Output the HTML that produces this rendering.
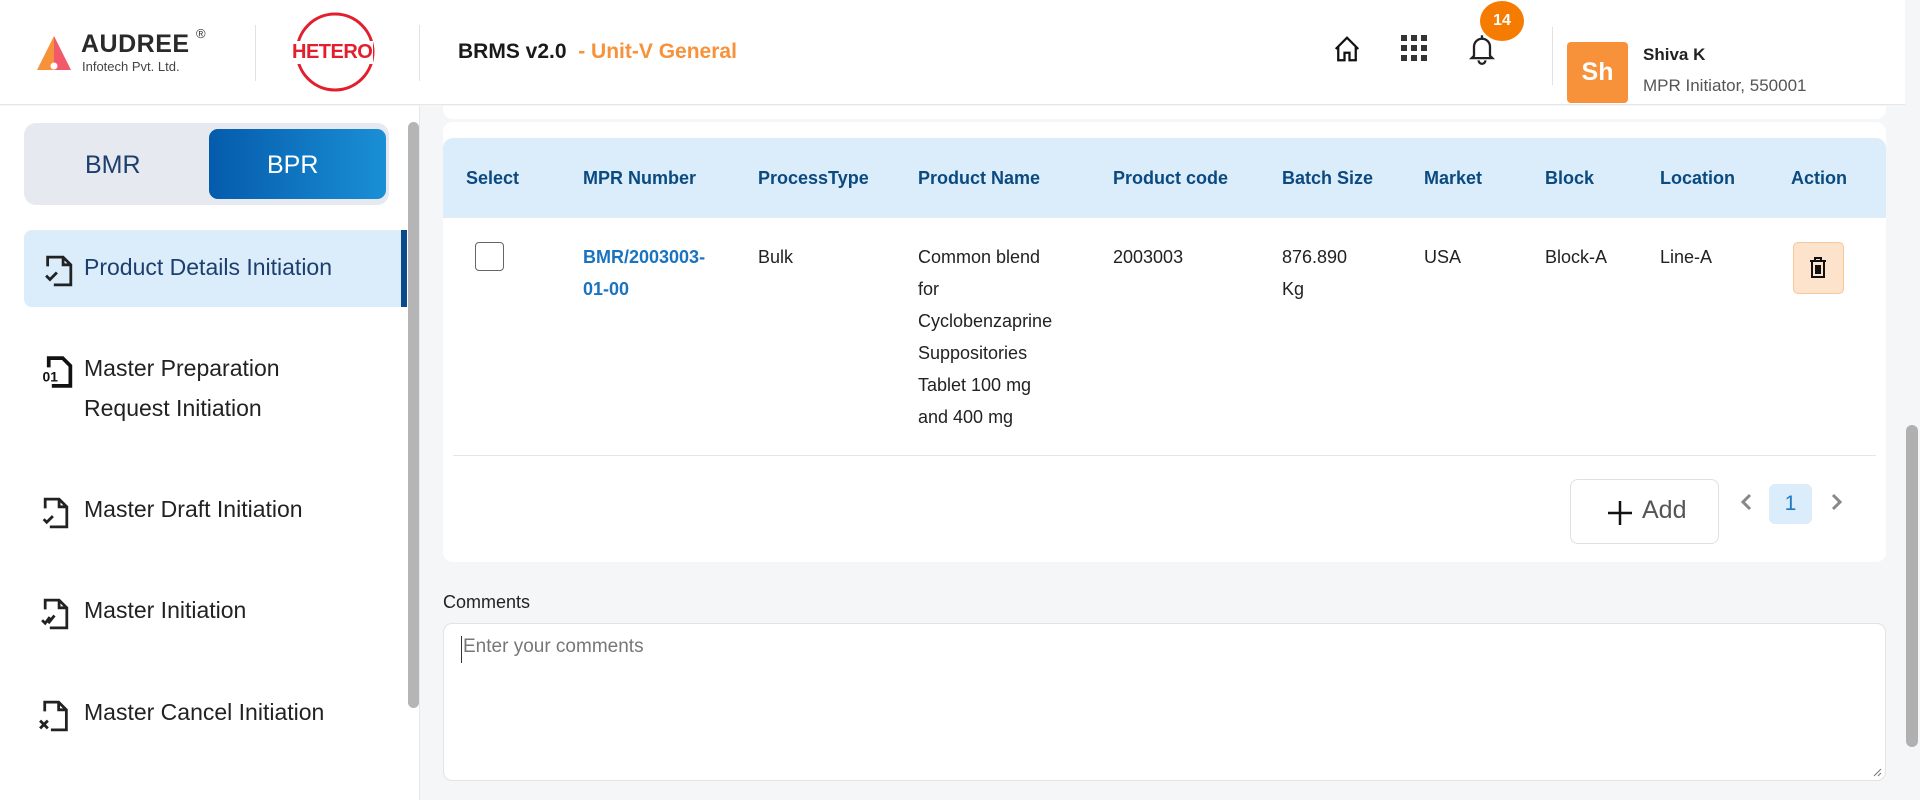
<!DOCTYPE html>
<html><head><meta charset="utf-8"><style>
*{box-sizing:border-box;margin:0;padding:0}
body{width:1920px;height:800px;overflow:hidden;background:#f5f6f8;font-family:"Liberation Sans",sans-serif;position:relative;color:#222}
.abs{position:absolute}
.hdr{left:0;top:0;width:1905px;height:105px;background:#fff;border-bottom:1px solid #e6e6e6}
.sb{left:0;top:106px;width:420px;height:694px;background:#fff;border-right:1px solid #e8e8e8}
.th{font-size:18px;font-weight:bold;color:#0b4a80;top:168px}
.td{font-size:18px;color:#222;line-height:32px;top:241px}
.nav{font-size:23px;color:#222;left:84px}
</style></head><body>
<div class="abs hdr"></div>
<svg class="abs" style="left:37px;top:36px" width="36" height="36" viewBox="0 0 36 36">
<polygon points="17,0 0,34 17,34" fill="#f7923a"/><polygon points="17,0 34,34 17,34" fill="#f25a6c"/>
<circle cx="17" cy="30" r="3.5" fill="#fff"/></svg>
<div class="abs" style="left:81px;top:30px;font-size:25px;font-weight:bold;color:#2a2a2a;letter-spacing:0.5px">AUDREE</div>
<div class="abs" style="left:196px;top:26px;font-size:13px;color:#333">®</div>
<div class="abs" style="left:82px;top:59px;font-size:13px;color:#444">Infotech Pvt. Ltd.</div>
<div class="abs" style="left:255px;top:25px;width:1px;height:56px;background:#e2e2e2"></div>
<svg class="abs" style="left:290px;top:11px" width="90" height="82"><circle cx="45" cy="41" r="38" fill="none" stroke="#e31e2d" stroke-width="3"/></svg>
<div class="abs" style="left:291px;top:41px;font-size:20px;font-weight:bold;color:#e31e2d;background:#fff;padding:0 1px;letter-spacing:-0.5px">HETERO</div>
<div class="abs" style="left:419px;top:25px;width:1px;height:56px;background:#e2e2e2"></div>
<div class="abs" style="left:458px;top:40px;font-size:21px;font-weight:bold;color:#1a1a1a">BRMS v2.0 <span style="color:#f7923a;font-weight:bold">&nbsp;- Unit-V General</span></div>
<svg class="abs" style="left:1332px;top:34px" width="30" height="30" viewBox="0 0 24 24" fill="none" stroke="#111" stroke-width="1.8"><path d="M3 12 L12 3 L21 12 M5 10 V21 H10 V15 H14 V21 H19 V10"/></svg>
<svg class="abs" style="left:1401px;top:35px" width="26" height="26" viewBox="0 0 26 26" fill="#333">
<rect x="0" y="0" width="6" height="6"/><rect x="10" y="0" width="6" height="6"/><rect x="20" y="0" width="6" height="6"/>
<rect x="0" y="10" width="6" height="6"/><rect x="10" y="10" width="6" height="6"/><rect x="20" y="10" width="6" height="6"/>
<rect x="0" y="20" width="6" height="6"/><rect x="10" y="20" width="6" height="6"/><rect x="20" y="20" width="6" height="6"/></svg>
<svg class="abs" style="left:1468px;top:33px" width="28" height="32" viewBox="0 0 24 28" fill="none" stroke="#222" stroke-width="2"><path d="M12 2 V4 M5 20 V12 A7 7 0 0 1 19 12 V20 L21 22 H3 Z M9 24 A3 3 0 0 0 15 24"/></svg>
<div class="abs" style="left:1480px;top:1px;width:44px;height:40px;border-radius:50%;background:#f57c00;color:#fff;font-weight:bold;font-size:16px;text-align:center;line-height:40px">14</div>
<div class="abs" style="left:1552px;top:27px;width:1px;height:58px;background:#e2e2e2"></div>
<div class="abs" style="left:1567px;top:42px;width:61px;height:61px;background:#f7923a;border-radius:4px;color:#fff;font-weight:bold;font-size:25px;text-align:center;line-height:61px">Sh</div>
<div class="abs" style="left:1643px;top:45px;font-size:17px;font-weight:bold;color:#222">Shiva K</div>
<div class="abs" style="left:1643px;top:76px;font-size:17px;color:#555">MPR Initiator, 550001</div>
<div class="abs" style="left:1905px;top:0;width:15px;height:800px;background:#f5f6f8"></div>
<div class="abs" style="left:1906px;top:425px;width:12px;height:322px;background:#b0b0b0;border-radius:6px"></div>
<div class="abs sb"></div>
<div class="abs" style="left:408px;top:122px;width:11px;height:586px;background:#b5b5b5;border-radius:6px"></div>
<div class="abs" style="left:24px;top:123px;width:365px;height:82px;background:#e6e9ef;border-radius:12px"></div>
<div class="abs" style="left:209px;top:129px;width:177px;height:70px;border-radius:9px;background:linear-gradient(90deg,#055bac,#1a8fd6)"></div>
<div class="abs" style="left:85px;top:151px;font-size:25px;color:#1c3f6e">BMR</div>
<div class="abs" style="left:267px;top:151px;font-size:25px;color:#fff">BPR</div>
<div class="abs" style="left:24px;top:230px;width:383px;height:77px;background:#dbecfa;border-radius:8px 0 0 8px"></div>
<div class="abs" style="left:401px;top:230px;width:6px;height:77px;background:#0a4a8a"></div>
<svg class="abs" style="left:44px;top:254px" width="32" height="34" viewBox="0 0 20 22" fill="none" stroke="#222" stroke-width="1.8"><path d="M2 8 V2 H12 L17 7 V20 H6 M12 2 V7 H17 M1 14 L3.5 16.5 L8 12"/></svg>
<div class="abs nav" style="top:254px;color:#1c3f6e">Product Details Initiation</div>
<svg class="abs" style="left:42px;top:355px" width="32" height="34" viewBox="0 0 20 22"><path d="M4 8 V2 H13 L18 7 V20 H6" fill="none" stroke="#111" stroke-width="2.4"/><text x="0" y="17" font-size="9" font-weight="bold" font-family="Liberation Sans" fill="#111">01</text></svg>
<div class="abs nav" style="top:355px">Master Preparation</div>
<div class="abs nav" style="top:395px">Request Initiation</div>
<svg class="abs" style="left:40px;top:496px" width="32" height="34" viewBox="0 0 20 22" fill="none" stroke="#222" stroke-width="1.8"><path d="M3 8 V2 H12 L17 7 V20 H6 M12 2 V7 H17 M2 15 L4 17 L8 13"/></svg>
<div class="abs nav" style="top:496px">Master Draft Initiation</div>
<svg class="abs" style="left:40px;top:597px" width="32" height="34" viewBox="0 0 20 22" fill="none" stroke="#222" stroke-width="1.8"><path d="M3 8 V2 H12 L17 7 V20 H6 M12 2 V7 H17 M1 15 L3 17 L6 13 M5 17 L9 12"/></svg>
<div class="abs nav" style="top:597px">Master Initiation</div>
<svg class="abs" style="left:38px;top:699px" width="32" height="34" viewBox="0 0 20 22" fill="none" stroke="#222" stroke-width="1.8"><path d="M4 8 V2 H13 L18 7 V20 H8 M13 2 V7 H18 M1 14 L6 19 M6 14 L1 19"/></svg>
<div class="abs nav" style="top:699px">Master Cancel Initiation</div>
<div class="abs" style="left:443px;top:106px;width:1443px;height:13px;background:#fff;border-radius:0 0 10px 10px"></div>
<div class="abs" style="left:443px;top:122px;width:1443px;height:440px;background:#fff;border-radius:10px"></div>
<div class="abs" style="left:443px;top:138px;width:1443px;height:80px;background:#dbecfa;border-radius:10px 10px 0 0"></div>
<div class="abs th" style="left:466px">Select</div>
<div class="abs th" style="left:583px">MPR Number</div>
<div class="abs th" style="left:758px">ProcessType</div>
<div class="abs th" style="left:918px">Product Name</div>
<div class="abs th" style="left:1113px">Product code</div>
<div class="abs th" style="left:1282px">Batch Size</div>
<div class="abs th" style="left:1424px">Market</div>
<div class="abs th" style="left:1545px">Block</div>
<div class="abs th" style="left:1660px">Location</div>
<div class="abs th" style="left:1791px">Action</div>
<div class="abs" style="left:475px;top:242px;width:29px;height:29px;border:1.5px solid #666;border-radius:4px;background:#fff"></div>
<div class="abs td" style="left:583px;color:#1a73c0;font-weight:bold">BMR/2003003-<br>01-00</div>
<div class="abs td" style="left:758px">Bulk</div>
<div class="abs td" style="left:918px">Common blend<br>for<br>Cyclobenzaprine<br>Suppositories<br>Tablet 100 mg<br>and 400 mg</div>
<div class="abs td" style="left:1113px">2003003</div>
<div class="abs td" style="left:1282px">876.890<br>Kg</div>
<div class="abs td" style="left:1424px">USA</div>
<div class="abs td" style="left:1545px">Block-A</div>
<div class="abs td" style="left:1660px">Line-A</div>
<div class="abs" style="left:1793px;top:242px;width:51px;height:52px;background:#fde3cb;border:1px solid #f5c99a;border-radius:5px"></div>
<svg class="abs" style="left:1809px;top:257px" width="18" height="22" viewBox="0 0 18 22" fill="none" stroke="#111" stroke-width="2"><path d="M1 4 H17 M6 4 V1 H12 V4 M3 4 V20 H15 V4 M7 8 V17 M9 8 V17 M11 8 V17" /></svg>
<div class="abs" style="left:453px;top:455px;width:1423px;height:1px;background:#e6e6e6"></div>
<div class="abs" style="left:1570px;top:479px;width:149px;height:65px;border:1px solid #e0e0e0;border-radius:8px;background:#fff"></div>
<svg class="abs" style="left:1608px;top:501px" width="24" height="24"><path d="M12 0 V24 M0 12 H24" stroke="#111" stroke-width="2.5"/></svg>
<div class="abs" style="left:1642px;top:496px;font-size:25px;color:#555">Add</div>
<svg class="abs" style="left:1739px;top:493px" width="14" height="18"><path d="M11 2 L4 9 L11 16" fill="none" stroke="#888" stroke-width="3"/></svg>
<div class="abs" style="left:1769px;top:484px;width:43px;height:40px;background:#dbecfa;border-radius:6px;color:#1a7bc8;font-size:21px;text-align:center;line-height:40px">1</div>
<svg class="abs" style="left:1830px;top:493px" width="14" height="18"><path d="M3 2 L10 9 L3 16" fill="none" stroke="#888" stroke-width="3"/></svg>
<div class="abs" style="left:443px;top:592px;font-size:18px;color:#222">Comments</div>
<div class="abs" style="left:443px;top:623px;width:1443px;height:158px;border:1px solid #e3e3e3;border-radius:9px;background:#fff"></div>
<div class="abs" style="left:461px;top:636px;width:1px;height:27px;background:#333"></div>
<div class="abs" style="left:463px;top:636px;font-size:19px;color:#777">Enter your comments</div>
<svg class="abs" style="left:1872px;top:767px" width="10" height="10"><path d="M9 2 L2 9 M9 6 L6 9" stroke="#777" stroke-width="1"/></svg>
</body></html>
